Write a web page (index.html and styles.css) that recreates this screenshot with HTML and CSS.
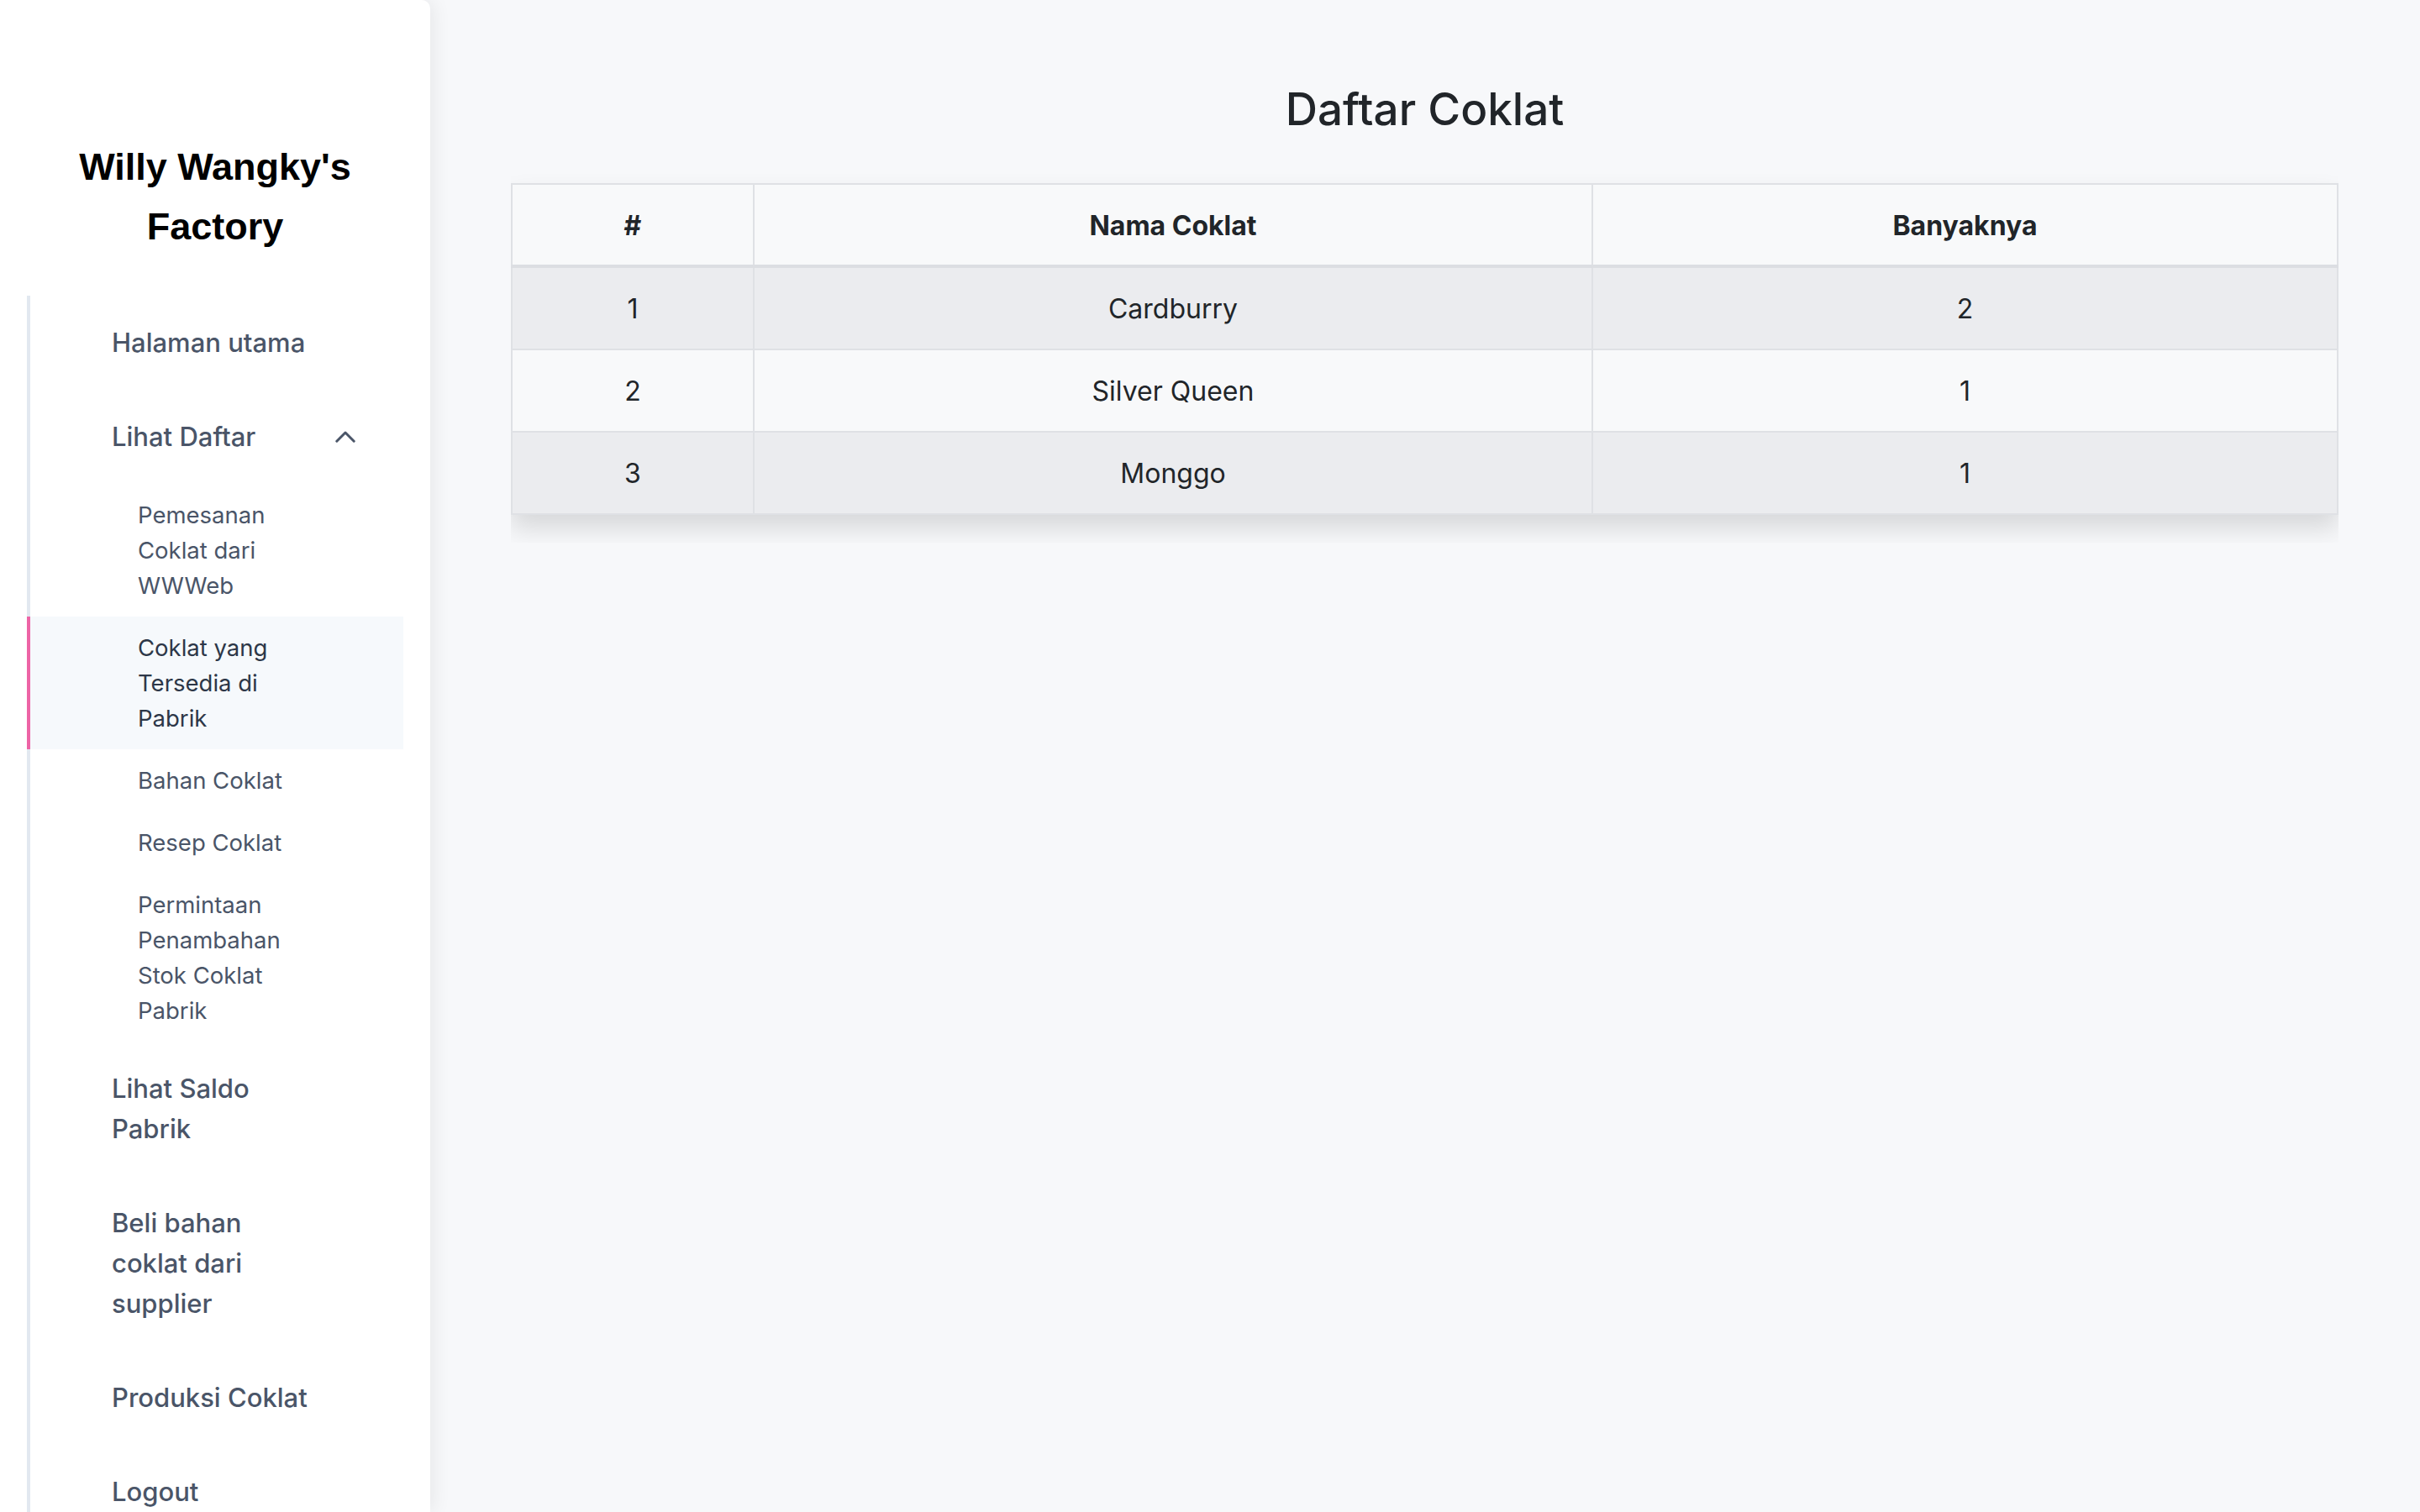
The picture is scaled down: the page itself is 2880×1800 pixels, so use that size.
FILE: index.html
```html
<!DOCTYPE html>
<html lang="id">
<head>
<meta charset="utf-8">
<title>Daftar Coklat</title>
<link rel="stylesheet" href="styles.css">
</head>
<body>
<div class="layout">
  <aside class="sidebar">
    <h1 class="brand">Willy Wangky's Factory</h1>
    <nav class="nav">
      <a class="nav-item"><span class="label">Halaman utama</span></a>
      <a class="nav-item"><span class="label">Lihat Daftar</span>
        <svg class="chev" width="24" height="14" viewBox="0 0 24 14"><polyline points="1.8,12.2 12,2 22.2,12.2" fill="none" stroke="#4a5568" stroke-width="3" stroke-linecap="round" stroke-linejoin="round"/></svg>
      </a>
      <div class="sub-list">
        <a class="sub-item"><span class="label">Pemesanan Coklat dari WWWeb</span></a>
        <a class="sub-item active"><span class="label">Coklat yang Tersedia di Pabrik</span></a>
        <a class="sub-item"><span class="label">Bahan Coklat</span></a>
        <a class="sub-item"><span class="label">Resep Coklat</span></a>
        <a class="sub-item"><span class="label">Permintaan Penambahan Stok Coklat Pabrik</span></a>
      </div>
      <a class="nav-item"><span class="label">Lihat Saldo Pabrik</span></a>
      <a class="nav-item"><span class="label">Beli bahan coklat dari supplier</span></a>
      <a class="nav-item"><span class="label">Produksi Coklat</span></a>
      <a class="nav-item"><span class="label">Logout</span></a>
    </nav>
  </aside>
  <main class="main">
    <h3 class="page-title">Daftar Coklat</h3>
    <div class="table-card">
      <table class="data-table">
        <colgroup>
          <col class="col-no">
          <col class="col-name">
          <col class="col-qty">
        </colgroup>
        <thead>
          <tr><th>#</th><th>Nama Coklat</th><th>Banyaknya</th></tr>
        </thead>
        <tbody>
          <tr><td>1</td><td>Cardburry</td><td>2</td></tr>
          <tr><td>2</td><td>Silver Queen</td><td>1</td></tr>
          <tr><td>3</td><td>Monggo</td><td>1</td></tr>
        </tbody>
      </table>
    </div>
  </main>
</div>
</body>
</html>
```

FILE: styles.css
```css
html, body {
  margin: 0;
  padding: 0;
  height: 100%;
  overflow: hidden;
}

body {
  background: #f7f8fa;
  font-family: Inter, "Noto Sans", sans-serif;
  color: #212529;
}

.layout {
  display: flex;
  height: 100vh;
}

.sidebar {
  width: 512px;
  flex-shrink: 0;
  background: #ffffff;
  border-top-right-radius: 10px;
  box-shadow: 4px 0 22px rgba(0, 0, 0, 0.07);
  overflow: hidden;
  display: flex;
  flex-direction: column;
  position: relative;
  z-index: 1;
}

.brand {
  margin: 0;
  padding: 163px 40px 0;
  font-family: "Liberation Sans", Arial, sans-serif;
  font-weight: 700;
  font-size: 45px;
  line-height: 71px;
  color: #000000;
  text-align: center;
}

.nav {
  margin: 47px 32px 0 32px;
  border-left: 4px solid #e2e8f0;
  flex: 1;
  display: flex;
  flex-direction: column;
}

.nav-item {
  display: flex;
  align-items: center;
  justify-content: space-between;
  padding: 32px 57px 32px 97px;
  font-size: 31px;
  line-height: 48px;
  font-weight: 500;
  color: #4a5568;
  flex-shrink: 0;
}

.nav-item .label {
  max-width: 245px;
}

.chev {
  display: block;
  width: 24px;
  height: 14px;
  flex-shrink: 0;
}

.sub-list {
  display: flex;
  flex-direction: column;
  flex-shrink: 0;
}

.sub-item {
  display: block;
  padding: 16px 0 16px 128px;
  font-size: 27.5px;
  line-height: 42px;
  font-weight: 400;
  color: #4a5568;
}

.sub-item .label {
  display: block;
  max-width: 208px;
}

.sub-item.active {
  margin-left: -4px;
  border-left: 4px solid #ed64a6;
  background: #f6f9fc;
  color: #2d3748;
}

.main {
  flex: 1;
  padding: 98px 97px 0 96px;
  min-width: 0;
}

.page-title {
  margin: 0 0 37px;
  text-align: center;
  font-size: 53px;
  line-height: 65px;
  font-weight: 500;
  color: #212529;
}

.table-card {
  padding: 18px 0 33px;
  overflow: hidden;
}

.data-table {
  width: 100%;
  border-collapse: collapse;
  table-layout: fixed;
  box-shadow: 0 16px 28px rgba(0, 0, 0, 0.13);
  border: 2px solid #dfe1e5;
}

.col-no { width: 288px; }
.col-name { width: 998px; }
.col-qty { width: auto; }

.data-table th,
.data-table td {
  padding: 25px 16px 23px;
  font-size: 32px;
  line-height: 48px;
  text-align: center;
  border: 2px solid #dfe1e5;
  color: #212529;
}

.data-table th {
  font-weight: 700;
  background: #f8f9fa;
  padding: 25px 16px 22px;
}

.data-table thead th {
  border-bottom: 4px solid #dcdee2;
}

.data-table tbody tr:nth-child(odd) td {
  background: #ebecef;
}

.data-table tbody tr:nth-child(even) td {
  background: #f8f9fa;
}
```
